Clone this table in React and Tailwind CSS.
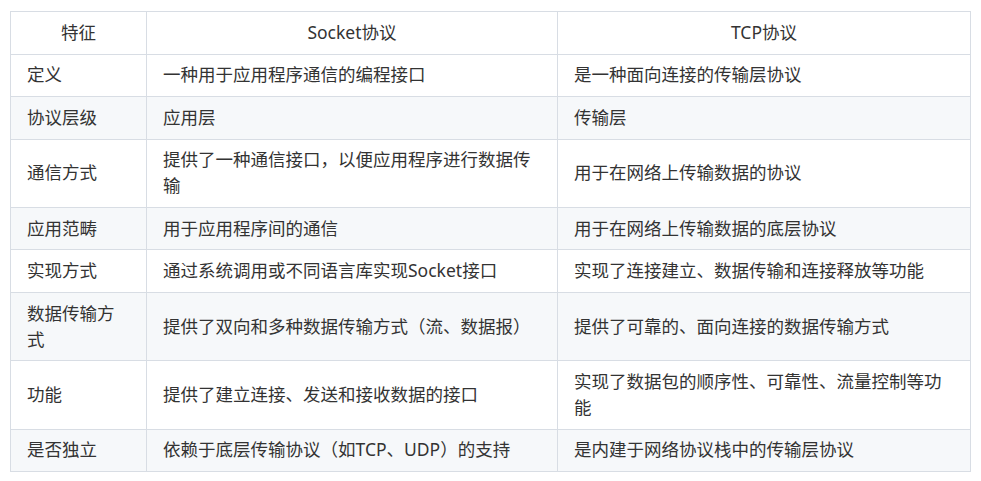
export default function App() {
  const rows = [
    ["定义", "一种用于应用程序通信的编程接口", "是一种面向连接的传输层协议"],
    ["协议层级", "应用层", "传输层"],
    ["通信方式", "提供了一种通信接口，以便应用程序进行数据传输", "用于在网络上传输数据的协议"],
    ["应用范畴", "用于应用程序间的通信", "用于在网络上传输数据的底层协议"],
    ["实现方式", "通过系统调用或不同语言库实现Socket接口", "实现了连接建立、数据传输和连接释放等功能"],
    ["数据传输方式", "提供了双向和多种数据传输方式（流、数据报）", "提供了可靠的、面向连接的数据传输方式"],
    ["功能", "提供了建立连接、发送和接收数据的接口", "实现了数据包的顺序性、可靠性、流量控制等功能"],
    ["是否独立", "依赖于底层传输协议（如TCP、UDP）的支持", "是内建于网络协议栈中的传输层协议"],
  ];
  const cell = "border border-[#d8dde4] px-4 py-[7.9px] align-middle";
  return (
    <div
      className="w-[981px] h-[481px] bg-white pl-[10px] pt-[11px] text-[#333] text-[17.5px] leading-[25.75px]"
      style={{ fontFamily: '"Noto Sans", "Noto Sans CJK SC", sans-serif' }}
    >
      <table className="table-fixed border-collapse w-[960px]">
        <colgroup>
          <col className="w-[136px]" />
          <col className="w-[411px]" />
          <col className="w-[413px]" />
        </colgroup>
        <thead>
          <tr className="bg-white">
            <th className={cell + " font-normal text-center"}>特征</th>
            <th className={cell + " font-normal text-center"}>Socket协议</th>
            <th className={cell + " font-normal text-center"}>TCP协议</th>
          </tr>
        </thead>
        <tbody>
          {rows.map((r, i) => (
            <tr key={i} className={i % 2 === 1 ? "bg-[#f6f8fa]" : "bg-white"}>
              {r.map((c, j) => (
                <td key={j} className={cell + " text-left"}>
                  {c}
                </td>
              ))}
            </tr>
          ))}
        </tbody>
      </table>
    </div>
  );
}
